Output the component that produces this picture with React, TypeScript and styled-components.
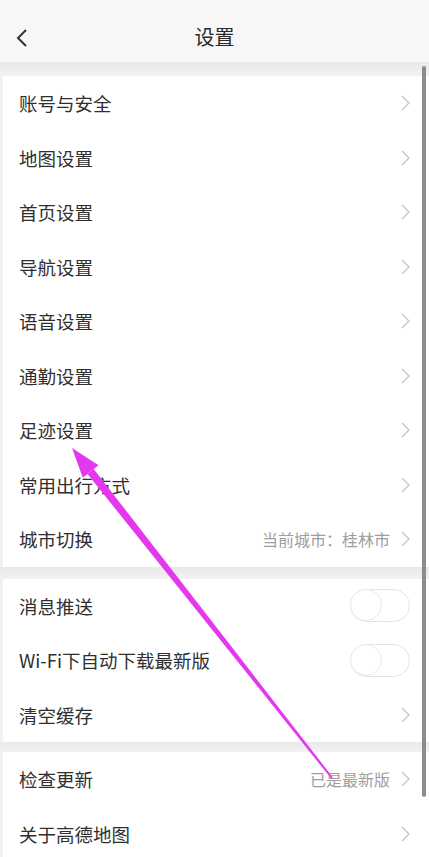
import React from "react";
import styled, { createGlobalStyle } from "styled-components";

const Global = createGlobalStyle`
  html, body { margin: 0; padding: 0; }
  body {
    width: 429px;
    height: 857px;
    overflow: hidden;
    background: #f1f1f1;
    font-family: "Noto Sans CJK SC", "Noto Sans", sans-serif;
  }
`;

const Page = styled.div`
  position: relative;
  width: 429px;
  height: 857px;
  overflow: hidden;
  background: #f1f1f1;
  display: flex;
  flex-direction: column;
`;

const Header = styled.div`
  height: 63px;
  flex: none;
  background: #f7f7f7;
  display: flex;
  align-items: center;
  justify-content: center;
  padding-top: 10px;
  box-sizing: border-box;
  position: relative;
  border-bottom: 1px solid #ececec;
`;

const BackBtn = styled.div`
  position: absolute;
  left: 14px;
  top: 27px;
  width: 16px;
  height: 22px;
  display: flex;
  align-items: center;
  justify-content: center;
`;

const Title = styled.div`
  font-size: 20px;
  color: #2a2a2a;
`;

const Gap = styled.div<{ $h: number }>`
  height: ${(p) => p.$h}px;
  flex: none;
  background: linear-gradient(#e9e9e9, #f2f2f2);
`;

const Group = styled.div`
  background: #fff;
  margin-left: 3px;
  display: flex;
  flex-direction: column;
`;

const Row = styled.div`
  height: 54.5px;
  display: flex;
  align-items: center;
  padding: 0 19px 0 16px;
  box-sizing: border-box;
`;

const Label = styled.div`
  flex: 1;
  font-size: 18.5px;
  color: #2f2f2f;
  white-space: nowrap;
`;

const Value = styled.div`
  font-size: 16px;
  color: #9e9e9e;
  margin-right: 11px;
  white-space: nowrap;
`;

const Toggle = styled.div`
  width: 60px;
  height: 33px;
  border-radius: 17px;
  border: 1.5px solid #e4e4e4;
  background: #fff;
  position: relative;
  box-sizing: border-box;
`;

const Knob = styled.div`
  position: absolute;
  left: -1px;
  top: -1px;
  width: 32px;
  height: 32px;
  border-radius: 50%;
  border: 1px solid #e8e8e8;
  background: #fff;
  box-sizing: border-box;
`;

const ScrollBar = styled.div`
  position: absolute;
  right: 3px;
  top: 66px;
  width: 4px;
  height: 731px;
  border-radius: 2px;
  background: #8c8c8c;
`;

const Overlay = styled.svg`
  position: absolute;
  left: 0;
  top: 0;
  pointer-events: none;
`;

const Chevron = () => (
  <svg width="9" height="16" viewBox="0 0 9 16">
    <polyline points="1,1 8,8 1,15" fill="none" stroke="#c6c6c6" strokeWidth="1.4" />
  </svg>
);

type Item = { label: string; value?: string; toggle?: boolean };

const group1: Item[] = [
  { label: "账号与安全" },
  { label: "地图设置" },
  { label: "首页设置" },
  { label: "导航设置" },
  { label: "语音设置" },
  { label: "通勤设置" },
  { label: "足迹设置" },
  { label: "常用出行方式" },
  { label: "城市切换", value: "当前城市：桂林市" },
];

const group2: Item[] = [
  { label: "消息推送", toggle: true },
  { label: "Wi-Fi下自动下载最新版", toggle: true },
  { label: "清空缓存" },
];

const group3: Item[] = [
  { label: "检查更新", value: "已是最新版" },
  { label: "关于高德地图" },
];

const renderGroup = (items: Item[]) => (
  <Group>
    {items.map((it) => (
      <Row key={it.label}>
        <Label>{it.label}</Label>
        {it.value && <Value>{it.value}</Value>}
        {it.toggle ? (
          <Toggle>
            <Knob />
          </Toggle>
        ) : (
          <Chevron />
        )}
      </Row>
    ))}
  </Group>
);

export default function App() {
  return (
    <>
      <Global />
      <Page>
        <Header>
          <BackBtn>
            <svg width="12" height="20" viewBox="0 0 12 20">
              <polyline points="10,2 2,10 10,18" fill="none" stroke="#333" strokeWidth="2" />
            </svg>
          </BackBtn>
          <Title>设置</Title>
        </Header>
        <Gap $h={13} />
        {renderGroup(group1)}
        <Gap $h={12} />
        {renderGroup(group2)}
        <Gap $h={10} />
        {renderGroup(group3)}
        <ScrollBar />
        <Overlay width="429" height="857" viewBox="0 0 429 857">
          <polygon
            points="93.7,469 87.5,474 331.2,778.6 332.8,777.4"
            fill="#e438ee"
          />
          <polygon points="72,448 98.5,465.3 82.8,477.7" fill="#e438ee" />
        </Overlay>
      </Page>
    </>
  );
}
